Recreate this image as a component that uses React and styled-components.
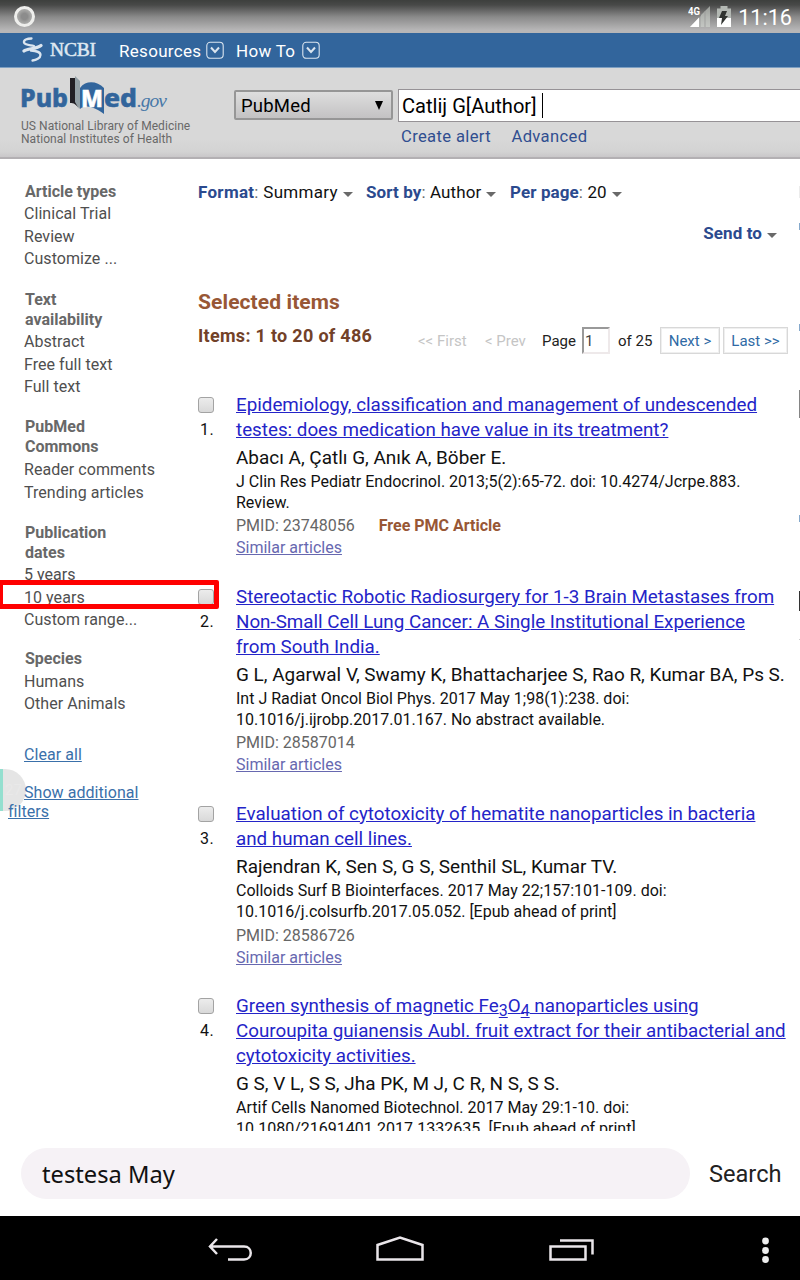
import React from 'react';
import styled, { createGlobalStyle } from 'styled-components';

const Global = createGlobalStyle`
  * { box-sizing: border-box; }
  body { margin: 0; background: #fff; font-family: Roboto, "Liberation Sans", sans-serif; color: #111; }
`;

const Screen = styled.div`
  position: relative;
  isolation: isolate;
  width: 800px;
  height: 1280px;
  overflow: hidden;
  display: flex;
  flex-direction: column;
  white-space: nowrap;
`;

const StatusBar = styled.div`
  height: 33px;
  flex: none;
  display: flex;
  align-items: center;
  padding: 0 8px 0 14px;
  background: linear-gradient(#3d3f3d 0, #484948 5px, #8a8a8a 17px, #b7b6b7 30px, #b7b6b7 100%);
`;
const Ring = styled.div`
  width: 21px;
  height: 21px;
  border-radius: 50%;
  border: 3px solid #eeeeec;
  background: radial-gradient(#8c8c8c 30%, #b5b5b3 75%);
  box-shadow: inset 0 0 2px #999;
  margin-right: auto;
`;
const Clock = styled.span`
  font-size: 21.6px;
  color: #fff;
  padding-top: 1px;
  margin-left: 7px;
`;

const NcbiBar = styled.div`
  height: 35px;
  flex: none;
  display: flex;
  align-items: center;
  padding-left: 22px;
  background: #32659c;
  border-bottom: 1px solid #7d9fc2;
  color: #fff;
`;
const NcbiName = styled.span`
  width: 48px;
  margin-left: 7px;
  font: 19.5px/30px "Liberation Serif", serif;
  color: #dfe8f1;
  -webkit-text-stroke: 0.5px #dfe8f1;
  letter-spacing: -0.2px;
`;
const NavLabel = styled.span`
  width: ${(p) => p.$w}px;
  font-size: 17px;
  letter-spacing: 0.3px;
  padding-top: 2px;
  margin-left: ${(p) => p.$gap}px;
`;

const Header = styled.header`
  height: 91px;
  flex: none;
  display: flex;
  background: linear-gradient(#d8d8d8 80%, #d3d3d3 94%, #c9c7c9);
  border-bottom: 2px solid #b3b0b3;
`;
const Brand = styled.div`
  width: 234px;
  flex: none;
  padding: 6px 0 0 20px;
`;
const Tagline = styled.div`
  font-size: 12px;
  line-height: 13px;
  letter-spacing: 0.05px;
  color: #686868;
  margin: 5px 0 0 1px;
`;
const Select = styled.div`
  width: 159px;
  height: 30px;
  margin: 22px 5px 0 0;
  flex: none;
  display: flex;
  align-items: center;
  justify-content: space-between;
  padding: 1px 8px 0 5px;
  border: 2px solid #969696;
  border-radius: 2px;
  background: linear-gradient(#dedede, #c3c2c3);
  font-size: 18.5px;
  letter-spacing: 0.2px;
  color: #000;
`;
const SearchArea = styled.div`
  flex: 1;
  padding-top: 21px;
`;
const Query = styled.div`
  height: 33px;
  display: flex;
  align-items: center;
  padding-left: 3px;
  border: 1px solid #969296;
  border-right: 0;
  background: #fff;
  font-size: 20.1px;
  color: #000;
`;
const Caret = styled.i`
  width: 1px;
  height: 25px;
  margin-left: 6px;
  background: #000;
`;
const HeaderLinks = styled.div`
  display: flex;
  gap: 20.5px;
  padding: 4px 0 0 3px;
  font-size: 16.6px;
  line-height: 21px;
  letter-spacing: 0.35px;
  color: #304e90;
`;

const Body = styled.div`
  height: 972px;
  flex: none;
  overflow: hidden;
  display: flex;
`;
const Sidebar = styled.aside`
  width: 198px;
  flex: none;
  padding: 22.5px 0 0 24px;
  font-size: 16px;
  letter-spacing: 0.05px;
`;
const Group = styled.section`
  height: ${(p) => p.$h}px;
`;
const GroupTitle = styled.h3`
  margin: 0 0 ${(p) => p.$after || 1.4}px 1px;
  font-size: 16px;
  line-height: 20px;
  font-weight: 700;
  letter-spacing: 0;
  color: #686868;
`;
const Filter = styled.div`
  line-height: 22.7px;
  color: #4f4f4f;
`;
const SideLink = styled.div`
  color: #3a70aa;
  text-decoration: underline;
  line-height: 19px;
  margin-bottom: 19px;
  text-indent: ${(p) => (p.$hang ? '16px' : 0)};
  margin-left: ${(p) => (p.$hang ? '-16px' : 0)};
`;

const Main = styled.main`
  width: 601px;
  flex: none;
`;
const Options = styled.div`
  display: flex;
  align-items: center;
  height: 24px;
  margin-top: 21px;
  font-size: 17px;
`;
const Option = styled.div`
  width: ${(p) => p.$w}px;
  letter-spacing: ${(p) => p.$ls || 0.1}px;
  color: #666;
  b { color: #2b4a8e; }
  span { color: #111; }
`;
const Arrow = styled.i`
  display: inline-block;
  margin-left: 5px;
  vertical-align: 1px;
  border: 5px solid transparent;
  border-top-color: #696969;
  border-bottom: 0;
`;
const SendTo = styled.div`
  margin: 17px 22px 0 0;
  height: 24px;
  line-height: 24px;
  text-align: right;
  font-size: 17px;
  font-weight: 700;
  letter-spacing: 0.1px;
  color: #2b4a8e;
`;
const Selected = styled.h2`
  margin: 42px 0 0;
  font-size: 21px;
  line-height: 30px;
  font-weight: 700;
  letter-spacing: 0.1px;
  color: #985735;
`;
const PagerRow = styled.div`
  display: flex;
  align-items: flex-start;
  height: 65px;
  margin-top: 10px;
`;
const Count = styled.h3`
  width: 220px;
  margin: -3px 0 0;
  font-size: 18px;
  line-height: 24px;
  font-weight: 700;
  letter-spacing: 0.3px;
  color: #724128;
`;
const PageText = styled.span`
  width: ${(p) => p.$w}px;
  font-size: 15px;
  line-height: 28px;
  color: ${(p) => (p.$off ? '#c5c5c5' : '#222')};
`;
const PageInput = styled.span`
  width: 28px;
  height: 27px;
  padding-left: 1px;
  font-size: 15px;
  line-height: 25px;
  color: #444;
  border: 2px solid;
  border-color: #999 #eee9ea #eee9ea #999;
  margin-right: 8px;
`;
const PageButton = styled.span`
  width: ${(p) => p.$w}px;
  height: 27px;
  margin-right: 3px;
  border: 1px solid #d8d8d8;
  outline: 1px solid #efefef;
  outline-offset: -2px;
  text-align: center;
  font-size: 15px;
  line-height: 26px;
  color: #2f6aa5;
`;

const Item = styled.article`
  display: flex;
  margin-bottom: 25.2px;
`;
const Mark = styled.div`
  width: 38px;
  flex: none;
  padding-top: 4.6px;
`;
const Check = styled.div`
  width: 16px;
  height: 16px;
  border: 1.5px solid #a3a3a3;
  border-radius: 3px;
  background: linear-gradient(#ececec, #d9d9d9);
`;
const Num = styled.div`
  padding: 7px 0 0 2px;
  font-size: 16px;
  line-height: 20px;
  letter-spacing: 0.4px;
`;
const Title = styled.div`
  padding-top: 0.7px;
  font-size: 18.8px;
  line-height: 25px;
  color: #2424c8;
  text-decoration: underline;
  margin-bottom: 3px;
  sub { font-size: 16px; line-height: 0; vertical-align: -4px; text-decoration: underline; }
`;
const Authors = styled.div`
  font-size: 18.95px;
  line-height: 24px;
  margin-bottom: 1px;
`;
const Cite = styled.div`
  font-size: 16.02px;
  line-height: 21px;
  margin-bottom: 2.7px;
`;
const Aux = styled.div`
  font-size: 16px;
  line-height: 22px;
  color: #666;
  b { color: #985735; margin-left: 24px; }
`;
const Similar = styled.div`
  font-size: 16px;
  line-height: 21.5px;
  color: #6768b0;
  text-decoration: underline;
`;

const Edge = styled.div`
  width: 1px;
  padding-top: 27px;
`;
const Sliver = styled.div`
  height: ${(p) => p.$h}px;
  background: ${(p) => p.$c};
  margin-bottom: ${(p) => p.$after}px;
`;

const SearchDock = styled.div`
  height: 85px;
  flex: none;
  display: flex;
  align-items: flex-start;
  padding: 17px 0 0 21px;
`;
const Pill = styled.div`
  width: 669px;
  height: 51px;
  border-radius: 26px;
  padding-left: 21px;
  background: #f6f2f6;
  font: 23.7px/53px "Noto Sans", sans-serif;
  color: #111;
`;
const SearchLabel = styled.span`
  margin-left: 19px;
  font-size: 23.6px;
  line-height: 53px;
  color: #222;
`;
const SystemNav = styled.nav`
  height: 64px;
  flex: none;
  background: #000;
  svg { display: block; }
`;

const HighlightFrame = styled.div`
  position: absolute;
  left: -2px;
  top: 580px;
  width: 221px;
  height: 29px;
  border: 5px solid #f00;
  border-radius: 2px;
`;
const Bubble = styled.div`
  position: absolute;
  z-index: -1;
  left: 0;
  top: 769px;
  width: 26px;
  height: 42px;
  border-radius: 0 21px 21px 0;
  border-left: 3px solid #94dfcf;
  background: #e5e5e5;
  font-size: 15px;
  line-height: 42px;
  padding-left: 2px;
  color: #e9e9e9;
`;

const ChevronBox = () => (
  <svg width="18" height="19" viewBox="0 0 18 19" fill="none" stroke="#dbe5ef">
    <rect x=".8" y="1.3" width="16.4" height="16" rx="3.5" strokeWidth="1.1" />
    <path d="M5 6.5l4 4.5 4-4.5" strokeWidth="2" />
  </svg>
);

const Helix = () => (
  <svg width="21" height="26" viewBox="0 0 21 26" fill="none" stroke="#dbe5ef" strokeLinecap="round">
    <path d="M9.500 1.500C5 1.500 1.500 3 2 5.500C2.500 8 8 8 12 9" strokeWidth="2.300" />
    <path d="M2 14C5 11.500 15 12 19 8.500" strokeWidth="3.200" />
    <path d="M9 13.500C14 14 18.500 14.500 18.500 18C18.500 21 14 23 10.500 23.500" strokeWidth="2.300" />
  </svg>
);

const LogoSvg = styled.svg`
  display: block;
  font-family: "Noto Sans", sans-serif;
`;
const PubMedLogo = () => (
  <LogoSvg width="150" height="41" viewBox="0 0 150 41">
    <path d="M60 35C66 30 74 33 84 40V14C77 7 66 6 60 14z" fill="#32659c" />
    <path d="M55 2l5 5v28l-5-5z" fill="#929fa5" />
    <path d="M50 4h5v24l4 7c-3-5-5-6-9-6z" fill="#211f24" />
    <g fontWeight="800" fontSize="24.500" fill="#32659c" stroke="#32659c" strokeWidth=".5">
      <text x="0" y="32.500" textLength="48" lengthAdjust="spacingAndGlyphs">Pub</text>
      <text x="61" y="32.500" fill="#fff" stroke="#fff" fontSize="23" textLength="22" lengthAdjust="spacingAndGlyphs">M</text>
      <text x="84" y="32.500" textLength="33" lengthAdjust="spacingAndGlyphs">ed</text>
    </g>
    <text x="117" y="32.500" fontFamily="Liberation Serif" fontStyle="italic" fontSize="19.500" fill="#4878a8" textLength="30">.gov</text>
  </LogoSvg>
);

const StatusIcons = () => (
  <svg width="43" height="24" viewBox="0 0 43 24">
    <path d="M22 1v21H2L13 11V10z" fill="#d7dcd6" opacity=".55" />
    <path d="M11 12.500V22H2z" fill="#fff" />
    <path d="M12 12v10M17 6v16" stroke="#999" strokeWidth="1" opacity=".8" />
    <text x="0" y="10" fontSize="11" fontWeight="700" fill="#fff" textLength="12" lengthAdjust="spacingAndGlyphs">4G</text>
    <path d="M29 3.500h3.500V1h7v2.500H43V22H29z" fill="#b3b8b3" />
    <path d="M29 13h14v9H29z" fill="#fff" />
    <path d="M34 6h5l-2 5h3l-7 9 1-7h-3z" fill="#303330" />
  </svg>
);

const groups = [
  { title: ['Article types'], items: ['Clinical Trial', 'Review', 'Customize ...'], h: 108 },
  { title: ['Text', 'availability'], items: ['Abstract', 'Free full text', 'Full text'], h: 127 },
  { title: ['PubMed', 'Commons'], items: ['Reader comments', 'Trending articles'], h: 106, after: 2.4 },
  { title: ['Publication', 'dates'], items: ['5 years', '10 years', 'Custom range...'], h: 126 },
  { title: ['Species'], items: ['Humans', 'Other Animals'], h: 96, after: 2 },
];

const results = [
  {
    title: ['Epidemiology, classification and management of undescended', 'testes: does medication have value in its treatment?'],
    authors: 'Abacı A, Çatlı G, Anık A, Böber E.',
    cite: ['J Clin Res Pediatr Endocrinol. 2013;5(2):65-72. doi: 10.4274/Jcrpe.883.', 'Review.'],
    pmid: '23748056',
    free: true,
  },
  {
    title: ['Stereotactic Robotic Radiosurgery for 1-3 Brain Metastases from', 'Non-Small Cell Lung Cancer: A Single Institutional Experience', 'from South India.'],
    authors: 'G L, Agarwal V, Swamy K, Bhattacharjee S, Rao R, Kumar BA, Ps S.',
    cite: ['Int J Radiat Oncol Biol Phys. 2017 May 1;98(1):238. doi:', '10.1016/j.ijrobp.2017.01.167. No abstract available.'],
    pmid: '28587014',
  },
  {
    title: ['Evaluation of cytotoxicity of hematite nanoparticles in bacteria', 'and human cell lines.'],
    authors: 'Rajendran K, Sen S, G S, Senthil SL, Kumar TV.',
    cite: ['Colloids Surf B Biointerfaces. 2017 May 22;157:101-109. doi:', '10.1016/j.colsurfb.2017.05.052. [Epub ahead of print]'],
    pmid: '28586726',
  },
  {
    title: [
      <>Green synthesis of magnetic Fe<sub>3</sub>O<sub>4</sub> nanoparticles using</>,
      'Couroupita guianensis Aubl. fruit extract for their antibacterial and',
      'cytotoxicity activities.',
    ],
    authors: 'G S, V L, S S, Jha PK, M J, C R, N S, S S.',
    cite: ['Artif Cells Nanomed Biotechnol. 2017 May 29:1-10. doi:', '10.1080/21691401.2017.1332635. [Epub ahead of print]'],
    pmid: null,
  },
];

const Lines = ({ of }) => of.map((line, i) => <div key={i}>{line}</div>);

export default function App() {
  return (
    <Screen>
      <Global />
      <StatusBar>
        <Ring />
        <StatusIcons />
        <Clock>11:16</Clock>
      </StatusBar>
      <NcbiBar>
        <Helix />
        <NcbiName>NCBI</NcbiName>
        <NavLabel $gap={21} $w={87}>Resources</NavLabel>
        <ChevronBox />
        <NavLabel $gap={12} $w={66}>How To</NavLabel>
        <ChevronBox />
      </NcbiBar>
      <Header>
        <Brand>
          <PubMedLogo />
          <Tagline>US National Library of Medicine<br />National Institutes of Health</Tagline>
        </Brand>
        <Select>
          <span>PubMed</span>
          <svg width="8" height="9" viewBox="0 0 9 9" preserveAspectRatio="none"><path d="M0 0h9L4.500 9z" /></svg>
        </Select>
        <SearchArea>
          <Query>Catlij G[Author]<Caret /></Query>
          <HeaderLinks><span>Create alert</span><span>Advanced</span></HeaderLinks>
        </SearchArea>
      </Header>
      <Body>
        <Sidebar>
          {groups.map((g) => (
            <Group key={g.title[0]} $h={g.h}>
              <GroupTitle $after={g.after}><Lines of={g.title} /></GroupTitle>
              {g.items.map((f) => <Filter key={f}>{f}</Filter>)}
            </Group>
          ))}
          <SideLink>Clear all</SideLink>
          <SideLink $hang>Show additional<br />filters</SideLink>
        </Sidebar>
        <Main>
          <Options>
            <Option $w={168} $ls={0.3}><b>Format</b>: <span>Summary</span><Arrow /></Option>
            <Option $w={144}><b>Sort by</b>: <span>Author</span><Arrow /></Option>
            <Option><b>Per page</b>: <span>20</span><Arrow /></Option>
          </Options>
          <SendTo>Send to<Arrow /></SendTo>
          <Selected>Selected items</Selected>
          <PagerRow>
            <Count>Items: 1 to 20 of 486</Count>
            <PageText $w={67} $off>&lt;&lt; First</PageText>
            <PageText $w={57} $off>&lt; Prev</PageText>
            <PageText $w={40}>Page</PageText>
            <PageInput>1</PageInput>
            <PageText $w={42}>of 25</PageText>
            <PageButton $w={60}>Next &gt;</PageButton>
            <PageButton $w={65}>Last &gt;&gt;</PageButton>
          </PagerRow>
          {results.map((r, i) => (
            <Item key={r.authors}>
              <Mark><Check /><Num>{i + 1}.</Num></Mark>
              <div>
                <Title><Lines of={r.title} /></Title>
                <Authors>{r.authors}</Authors>
                <Cite><Lines of={r.cite} /></Cite>
                {r.pmid && (
                  <>
                    <Aux>PMID: {r.pmid}{r.free && <b>Free PMC Article</b>}</Aux>
                    <Similar>Similar articles</Similar>
                  </>
                )}
              </div>
            </Item>
          ))}
        </Main>
        <Edge>
          <Sliver $h={12} $c="#ececec" $after={25} />
          <Sliver $h={7} $c="#85a9cc" $after={94} />
          <Sliver $h={7} $c="#85a9cc" $after={59} />
          <Sliver $h={28} $c="#858585" $after={97} />
          <Sliver $h={7} $c="#85a9cc" $after={69} />
          <Sliver $h={20} $c="#333" $after={28} />
          <Sliver $h={1} $c="#ccc" $after={0} />
        </Edge>
      </Body>
      <SearchDock>
        <Pill>testesa May</Pill>
        <SearchLabel>Search</SearchLabel>
      </SearchDock>
      <SystemNav>
        <svg width="800" height="64" viewBox="0 0 800 64" fill="none" stroke="#eae6ea" strokeWidth="2.500">
          <path d="M217 23l-7 7.500 7 7.500M210 30.500h34c9 0 9 13 0 13h-16" />
          <path d="M377.500 43.500v-14.500l22.500-7.500 22.500 7.500v14.500z" />
          <path d="M550.500 30.500h35v13h-35zM560 24.500h32.500v14" />
          <g fill="#eee" stroke="none"><circle cx="765.500" cy="25" r="3.400" /><circle cx="765.500" cy="34.500" r="3.400" /><circle cx="765.500" cy="43.500" r="3.400" /></g>
        </svg>
      </SystemNav>
      <Bubble>27</Bubble>
      <HighlightFrame />
    </Screen>
  );
}
